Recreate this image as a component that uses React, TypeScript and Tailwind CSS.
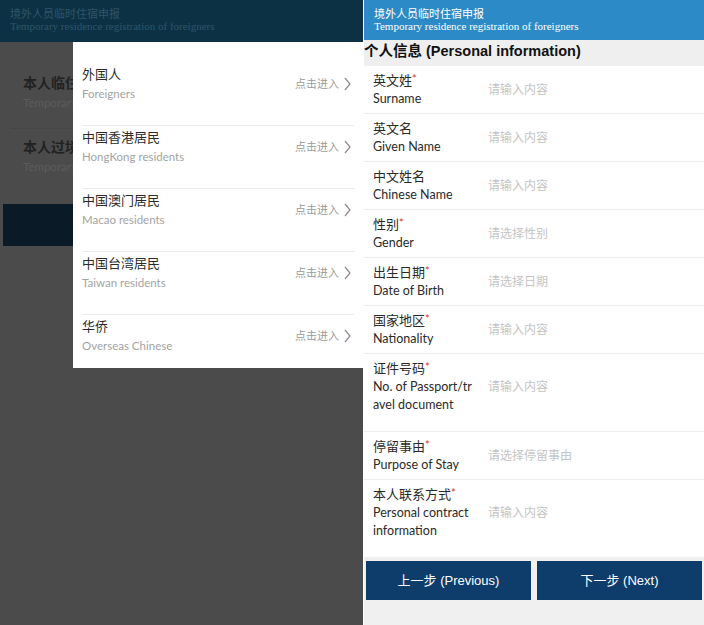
import React from 'react';

const sans = "font-['Lato','Noto_Sans_CJK_SC',sans-serif]";
const serif = "font-['Liberation_Serif','Noto_Sans_CJK_SC',serif]";
const arial = "font-['Liberation_Sans','Noto_Sans_CJK_SC',sans-serif]";

const identities = [
  { zh: '外国人', en: 'Foreigners' },
  { zh: '中国香港居民', en: 'HongKong residents' },
  { zh: '中国澳门居民', en: 'Macao residents' },
  { zh: '中国台湾居民', en: 'Taiwan residents' },
  { zh: '华侨', en: 'Overseas Chinese' },
];

type Field = { zh: string; en: string[]; required?: boolean; placeholder: string };

const fields: Field[] = [
  { zh: '英文姓', en: ['Surname'], required: true, placeholder: '请输入内容' },
  { zh: '英文名', en: ['Given Name'], placeholder: '请输入内容' },
  { zh: '中文姓名', en: ['Chinese Name'], placeholder: '请输入内容' },
  { zh: '性别', en: ['Gender'], required: true, placeholder: '请选择性别' },
  { zh: '出生日期', en: ['Date of Birth'], required: true, placeholder: '请选择日期' },
  { zh: '国家地区', en: ['Nationality'], required: true, placeholder: '请输入内容' },
  { zh: '证件号码', en: ['No. of Passport/tr', 'avel document'], required: true, placeholder: '请输入内容' },
  { zh: '停留事由', en: ['Purpose of Stay'], required: true, placeholder: '请选择停留事由' },
  { zh: '本人联系方式', en: ['Personal contract', 'information'], required: true, placeholder: '请输入内容' },
];

function Chevron() {
  return (
    <svg width="7" height="14" viewBox="0 0 7 14" className="ml-[5px]">
      <polyline points="1,1 6,7 1,13" fill="none" stroke="#8a8a8a" strokeWidth="1.2" />
    </svg>
  );
}

function Header({ dim }: { dim?: boolean }) {
  return (
    <div
      className={`shrink-0 px-[10px] pt-[8px] ${dim ? 'h-[42px] bg-[#0c3145] text-[#2e5568]' : 'h-[40px] bg-[#2c8bc6] text-white'}`}
    >
      <div className={`${sans} text-[11px] leading-[12px]`}>境外人员临时住宿申报</div>
      <div className={`${serif} text-[11px] leading-[13px]`}>Temporary residence registration of foreigners</div>
    </div>
  );
}

function LeftScreen() {
  return (
    <div className="relative w-[363px] h-full flex flex-col bg-[#4b4b4b] overflow-hidden">
      <Header dim />
      <div className="pl-[10px]">
        <div className="w-[63px] overflow-hidden whitespace-nowrap pl-[13px] pt-[31px] pb-[15px] border-b border-[#454545]">
          <div className={`${sans} text-[14px] leading-[20px] font-semibold text-[#222]`}>本人临住宿登记</div>
          <div className={`${sans} text-[11.5px] leading-[20px] text-[#5c5c5c]`}>Temporary accommodation</div>
        </div>
        <div className="w-[63px] overflow-hidden whitespace-nowrap pl-[13px] pt-[8px]">
          <div className={`${sans} text-[14px] leading-[20px] font-semibold text-[#222]`}>本人过境住宿登记</div>
          <div className={`${sans} text-[11.5px] leading-[20px] text-[#5c5c5c]`}>Temporary transit</div>
        </div>
      </div>
      <div className="ml-[3px] w-[70px] mt-[27px] h-[42px] bg-[#0a1a26]" />

      <div className="absolute left-[73px] top-[42px] w-[290px] bg-white pt-[21px]">
        {identities.map((it, i) => (
          <div
            key={it.zh}
            className={`mx-[9px] flex items-start justify-between ${i < identities.length - 1 ? 'h-[63px] border-b border-[#ebebeb]' : 'h-[53px]'}`}
          >
            <div className="pt-[1px]">
              <div className={`${sans} text-[13px] leading-[20px] text-[#2b2b2b]`}>{it.zh}</div>
              <div className={`${sans} text-[11.5px] leading-[20px] text-[#a3a3a3]`}>{it.en}</div>
            </div>
            <div className="flex items-center h-[42px] pr-[3px]">
              <span className={`${sans} text-[11px] text-[#9a9a9a]`}>点击进入</span>
              <Chevron />
            </div>
          </div>
        ))}
      </div>
    </div>
  );
}

function FieldRow({ f, last }: { f: Field; last?: boolean }) {
  const tall = f.en.length > 1;
  return (
    <div
      className={`flex items-center bg-white px-[9px] pt-[5px] ${tall ? 'pb-[17px]' : 'pb-[5px]'} ${last ? '' : 'border-b border-[#ececec]'}`}
    >
      <div className="w-[115px] shrink-0">
        <div className={`${sans} text-[13px] leading-[19px] text-[#2a2a2a]`}>
          {f.zh}
          {f.required && <span className="text-[#d4302f] text-[11px] align-top leading-[16px]">*</span>}
        </div>
        {f.en.map((l) => (
          <div key={l} className={`${sans} text-[12.5px] leading-[18px] text-[#2a2a2a]`}>{l}</div>
        ))}
      </div>
      <div className={`${sans} text-[12px] text-[#c4c4c4]`}>{f.placeholder}</div>
    </div>
  );
}

function RightScreen() {
  return (
    <div className="flex-1 h-full flex flex-col bg-[#f0f0f0] ml-[1px]">
      <Header />
      <div className={`${arial} h-[26px] shrink-0 flex items-center pb-[2px] text-[14.5px] font-bold text-[#111] bg-[#efefef]`}>
        个人信息 (Personal information)
      </div>
      <div className="flex flex-col">
        {fields.map((f, i) => (
          <FieldRow key={f.zh} f={f} last={i === fields.length - 1} />
        ))}
      </div>
      <div className="flex gap-[6px] px-[2px] pt-[4px]">
        <button className={`${arial} flex-1 h-[39px] bg-[#0e3d6b] text-white text-[13px]`}>上一步 (Previous)</button>
        <button className={`${arial} flex-1 h-[39px] bg-[#0e3d6b] text-white text-[13px]`}>下一步 (Next)</button>
      </div>
    </div>
  );
}

export default function App() {
  return (
    <div className="w-[704px] h-[625px] flex overflow-hidden bg-white">
      <LeftScreen />
      <RightScreen />
    </div>
  );
}
